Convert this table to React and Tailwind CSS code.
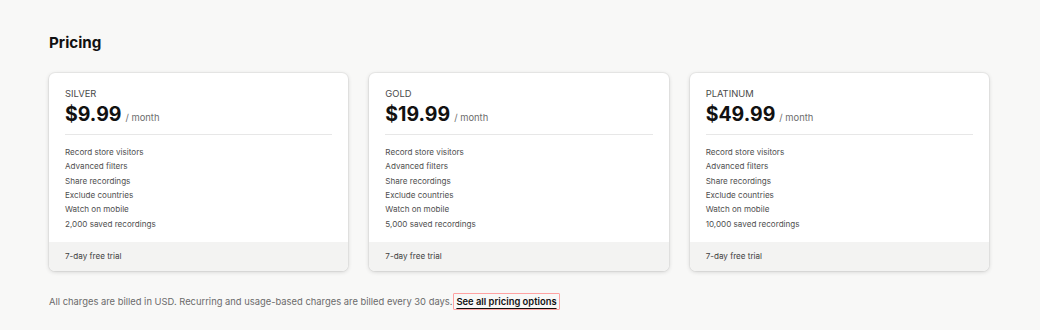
const plans = [
  { name: "SILVER", price: "$9.99", saved: "2,000 saved recordings" },
  { name: "GOLD", price: "$19.99", saved: "5,000 saved recordings" },
  { name: "PLATINUM", price: "$49.99", saved: "10,000 saved recordings" },
];

const features = [
  "Record store visitors",
  "Advanced filters",
  "Share recordings",
  "Exclude countries",
  "Watch on mobile",
];

function PlanCard({ plan }) {
  return (
    <div className="flex flex-col overflow-hidden rounded-md bg-white shadow-[0_1px_4px_rgba(0,0,0,0.16),0_0_0_1px_rgba(0,0,0,0.04)]">
      <div className="px-4 pt-[15px] pb-[11px]">
        <p className="text-[9.4px] leading-[12px] text-[#4a4a4a]">{plan.name}</p>
        <div className="mt-[3px] flex items-baseline gap-[4px]">
          <span className="text-[19.5px] font-bold leading-[22px] text-[#111]">{plan.price}</span>
          <span className="text-[9.4px] text-[#6d6d6d]">/ month</span>
        </div>
        <div className="mt-[9px] h-px bg-[#e7e7e7]" />
        <ul className="mt-[10px] flex flex-col text-[8.1px] leading-[14.3px] text-[#4f4f4f]">
          {features.map((f) => (
            <li key={f}>{f}</li>
          ))}
          <li>{plan.saved}</li>
        </ul>
      </div>
      <div className="bg-[#f3f3f2] px-4 py-[8px] text-[8.1px] leading-[13px] text-[#3f3f3f]">
        7-day free trial
      </div>
    </div>
  );
}

export default function App() {
  return (
    <div className="min-h-[330px] w-full bg-[#f8f8f7] px-[49px] pt-[34px] font-[Inter,sans-serif]">
      <h1 className="text-[15.2px] font-bold leading-[18px] text-[#111]">Pricing</h1>
      <div className="mt-[21px] grid grid-cols-3 gap-[21px] pr-[2px]">
        {plans.map((p) => (
          <PlanCard key={p.name} plan={p} />
        ))}
      </div>
      <p className="mt-[22px] text-[9.4px] leading-[17px] text-[#6b6b6b]">
        All charges are billed in USD. Recurring and usage-based charges are billed every 30 days.
        <span className="ml-[1px] inline-block rounded-[1px] border border-solid border-red-300 px-[2px] leading-[15px]">
          <a
            href="#"
            className="font-semibold text-[#111] underline decoration-1 underline-offset-[3px]"
          >
            See all pricing options
          </a>
        </span>
      </p>
    </div>
  );
}
